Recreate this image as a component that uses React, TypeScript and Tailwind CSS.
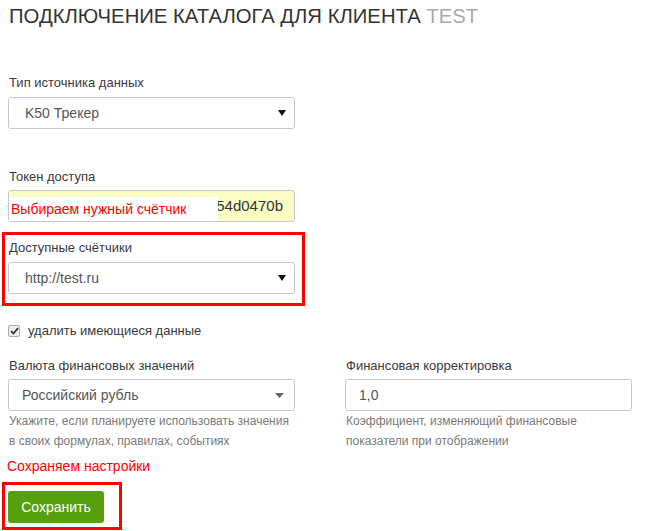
import React from 'react';

const FONT = { fontFamily: '"Liberation Sans", Arial, sans-serif' };

function BlackArrow() {
  return (
    <svg width="8" height="6" viewBox="0 0 8 6" className="shrink-0">
      <path d="M0 0 H8 L4 6 Z" fill="#111" />
    </svg>
  );
}

function GrayCaret() {
  return (
    <svg width="9" height="5" viewBox="0 0 9 5" className="shrink-0">
      <path d="M0 0 H9 L4.5 5 Z" fill="#666" />
    </svg>
  );
}

function Label({ children }: { children: React.ReactNode }) {
  return <div className="text-[13px] leading-4 text-[#3a3a3a] pl-[1px]">{children}</div>;
}

function SelectBox({ value, caret, pad = 'pl-[16px]' }: { value: string; caret: 'black' | 'gray'; pad?: string }) {
  return (
    <div className={`flex h-[32px] w-[287px] items-center justify-between rounded-[3px] border border-[#c8c8c8] bg-white pr-[8px] ${pad}`}>
      <span className="text-[14px] text-[#555]">{value}</span>
      {caret === 'black' ? <BlackArrow /> : <span className="pr-[2px]"><GrayCaret /></span>}
    </div>
  );
}

function Help({ children }: { children: React.ReactNode }) {
  return <div className="text-[12px] leading-5 text-[#7a7a7a] pl-[1px]">{children}</div>;
}

export default function App() {
  return (
    <div className="min-h-[531px] w-[645px] bg-white pl-2 pt-[6px]" style={FONT}>
      <h1 className="text-[20.3px] leading-5 text-[#333] pl-[1px]">
        ПОДКЛЮЧЕНИЕ КАТАЛОГА ДЛЯ КЛИЕНТА <span className="text-[#aaa]">TEST</span>
      </h1>

      <div className="mt-[49px]">
        <Label>Тип источника данных</Label>
        <div className="mt-[6px]">
          <SelectBox value="K50 Трекер" caret="black" />
        </div>
      </div>

      <div className="mt-[40px]">
        <Label>Токен доступа</Label>
        <div className="relative mt-[5px] flex h-[32px] w-[287px] items-center justify-end rounded-[3px] border border-[#c8c8c8] bg-[#fafdc4] pr-[11px]">
          <span className="text-[15px] text-[#333]">54d0470b</span>
          <div className="absolute bottom-0 left-0 top-[6px] flex w-[209px] items-center bg-white pl-[2px]">
            <span className="text-[14px] text-[#f00]">Выбираем нужный счётчик</span>
          </div>
        </div>
      </div>

      <div className="-ml-[6px] mt-[10px] w-[303px] border-[3px] border-[#f00] pb-[9px] pl-[3px] pt-[5px]">
        <Label>Доступные счётчики</Label>
        <div className="mt-[6px]">
          <SelectBox value="http://test.ru" caret="black" />
        </div>
      </div>

      <div className="mt-[17px] flex items-center gap-[8px]">
        <span className="flex h-[12px] w-[12px] items-center justify-center rounded-[2px] border border-[#aaa] bg-[#eee]">
          <svg width="9" height="8" viewBox="0 0 9 8">
            <path d="M1 4.2 L3.4 6.5 L8 1.2" stroke="#333" strokeWidth="1.8" fill="none" />
          </svg>
        </span>
        <span className="text-[13px] leading-4 text-[#3a3a3a]">удалить имеющиеся данные</span>
      </div>

      <div className="mt-[19px] flex gap-[50px]">
        <div className="w-[287px]">
          <Label>Валюта финансовых значений</Label>
          <div className="mt-[5px]">
            <SelectBox value="Российский рубль" caret="gray" pad="pl-[13px]" />
          </div>
          <Help>
            Укажите, если планируете использовать значения
            <br />в своих формулах, правилах, событиях
          </Help>
        </div>
        <div className="w-[287px]">
          <Label>Финансовая корректировка</Label>
          <div className="mt-[5px] flex h-[32px] w-[287px] items-center rounded-[3px] border border-[#c8c8c8] bg-white pl-[13px]">
            <span className="text-[14px] text-[#555]">1,0</span>
          </div>
          <Help>
            Коэффициент, изменяющий финансовые
            <br />
            показатели при отображении
          </Help>
        </div>
      </div>

      <div className="mt-[7px] text-[14px] leading-4 text-[#f00] -ml-[1px]">Сохраняем настройки</div>

      <div className="-ml-[6px] mt-[8px] w-[120px] border-[3px] border-[#f00] pb-[4px] pl-[3px] pt-[6px]">
        <button className="h-[32px] w-[96px] rounded-[3px] bg-[#56a00e] text-[14px] text-white">
          Сохранить
        </button>
      </div>
    </div>
  );
}
